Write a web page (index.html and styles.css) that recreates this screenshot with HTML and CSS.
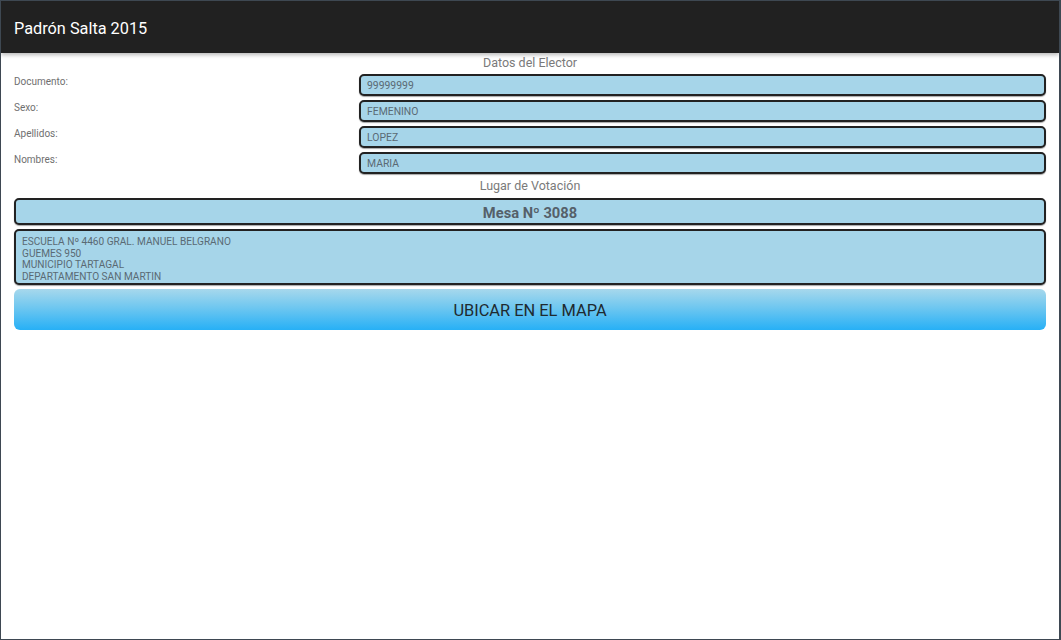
FILE: index.html
```html
<!DOCTYPE html>
<html lang="es">
<head>
<meta charset="utf-8">
<title>Padrón Salta 2015</title>
<link rel="stylesheet" href="styles.css">
</head>
<body>
<div class="window">
  <header class="action-bar">
    <h1 class="title">Padrón Salta 2015</h1>
  </header>
  <main class="content">
    <h2 class="section-title">Datos del Elector</h2>
    <div class="form">
      <div class="label">Documento:</div>
      <div class="field">99999999</div>
      <div class="label">Sexo:</div>
      <div class="field">FEMENINO</div>
      <div class="label">Apellidos:</div>
      <div class="field">LOPEZ</div>
      <div class="label">Nombres:</div>
      <div class="field">MARIA</div>
    </div>
    <h2 class="section-title section-title--place">Lugar de Votación</h2>
    <div class="mesa">Mesa Nº 3088</div>
    <div class="address">
      <div>ESCUELA Nº 4460 GRAL. MANUEL BELGRANO</div>
      <div>GUEMES 950</div>
      <div>MUNICIPIO TARTAGAL</div>
      <div>DEPARTAMENTO SAN MARTIN</div>
    </div>
    <button class="map-button" type="button">UBICAR EN EL MAPA</button>
  </main>
</div>
</body>
</html>
```

FILE: styles.css
```css
html, body {
  margin: 0;
  padding: 0;
  background: #ffffff;
}

body {
  font-family: Roboto, "Noto Sans", "Liberation Sans", sans-serif;
}

.window {
  box-sizing: border-box;
  width: 1061px;
  height: 640px;
  border: 1px solid #3e4852;
  border-right-width: 2px;
  display: flex;
  flex-direction: column;
  background: #ffffff;
  overflow: hidden;
}

.action-bar {
  height: 52px;
  background: #212121;
  display: flex;
  align-items: center;
  padding-left: 13px;
  box-shadow: 0 2px 4px rgba(0, 0, 0, 0.28);
  position: relative;
  z-index: 1;
}

.title {
  margin: 0;
  color: #ffffff;
  font-size: 16.3px;
  font-weight: 400;
  padding-top: 3px;
}

.content {
  padding: 0 13px;
  display: flex;
  flex-direction: column;
}

.section-title {
  margin: 0;
  text-align: center;
  font-size: 12.5px;
  font-weight: 400;
  color: #7a7a7a;
  line-height: 16px;
  height: 16px;
  padding-top: 2px;
}

.section-title--place {
  margin-top: 3px;
  padding-top: 1px;
}

.form {
  display: grid;
  grid-template-columns: 345px 1fr;
  row-gap: 4px;
  margin-top: 3px;
}

.label {
  font-size: 10px;
  color: #6f6f6f;
  line-height: 12px;
  padding-top: 2px;
}

.field {
  box-sizing: border-box;
  height: 22px;
  background: #a6d5e9;
  border: 2px solid #222222;
  border-radius: 5px;
  font-size: 10.4px;
  color: #5a6a74;
  line-height: 20px;
  padding-left: 6px;
  box-shadow: 0 1px 1px rgba(0, 0, 0, 0.35);
}

.mesa {
  box-sizing: border-box;
  margin-top: 4px;
  height: 27px;
  background: #a6d5e9;
  border: 2px solid #222222;
  border-radius: 5px;
  text-align: center;
  font-size: 14.7px;
  font-weight: 700;
  color: #556069;
  line-height: 23px;
  padding-top: 2px;
  box-shadow: 0 1px 1px rgba(0, 0, 0, 0.35);
}

.address {
  box-sizing: border-box;
  margin-top: 4px;
  height: 56px;
  background: #a6d5e9;
  border: 2px solid #222222;
  border-radius: 5px;
  padding: 5px 0 0 6px;
  font-size: 10.1px;
  color: #5a6a74;
  line-height: 11.6px;
  box-shadow: 0 1px 1px rgba(0, 0, 0, 0.35);
}

.map-button {
  margin-top: 4px;
  height: 41px;
  border: none;
  border-radius: 6px;
  background: linear-gradient(to bottom, #a7d8ec 0%, #6fc7f0 45%, #27b0f6 100%);
  font-family: inherit;
  font-size: 16.4px;
  color: #1f2a30;
  padding: 1px 0 0;
}
```
